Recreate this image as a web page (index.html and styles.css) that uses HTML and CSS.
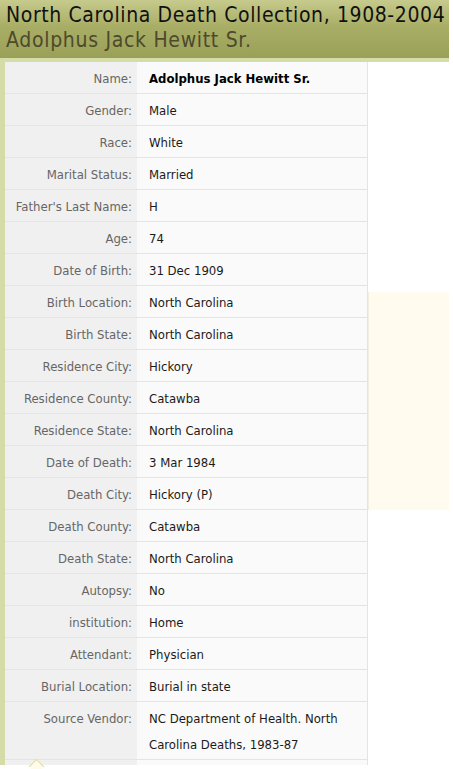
FILE: index.html
```html
<!DOCTYPE html>
<html>
<head>
<meta charset="utf-8">
<link rel="stylesheet" href="styles.css">
</head>
<body>
<div class="page">
  <div class="header">
    <h1 class="title">North Carolina Death Collection, 1908-2004</h1>
    <h2 class="subtitle">Adolphus Jack Hewitt Sr.</h2>
  </div>
  <div class="content">
    <table class="record">
      <tr><th>Name:</th><td class="name">Adolphus Jack Hewitt Sr.</td></tr>
      <tr><th>Gender:</th><td>Male</td></tr>
      <tr><th>Race:</th><td>White</td></tr>
      <tr><th>Marital Status:</th><td>Married</td></tr>
      <tr><th>Father's Last Name:</th><td>H</td></tr>
      <tr><th>Age:</th><td>74</td></tr>
      <tr><th>Date of Birth:</th><td>31 Dec 1909</td></tr>
      <tr><th>Birth Location:</th><td>North Carolina</td></tr>
      <tr><th>Birth State:</th><td>North Carolina</td></tr>
      <tr><th>Residence City:</th><td>Hickory</td></tr>
      <tr><th>Residence County:</th><td>Catawba</td></tr>
      <tr><th>Residence State:</th><td>North Carolina</td></tr>
      <tr><th>Date of Death:</th><td>3 Mar 1984</td></tr>
      <tr><th>Death City:</th><td>Hickory (P)</td></tr>
      <tr><th>Death County:</th><td>Catawba</td></tr>
      <tr><th>Death State:</th><td>North Carolina</td></tr>
      <tr><th>Autopsy:</th><td>No</td></tr>
      <tr><th>institution:</th><td>Home</td></tr>
      <tr><th>Attendant:</th><td>Physician</td></tr>
      <tr><th>Burial Location:</th><td>Burial in state</td></tr>
      <tr><th>Source Vendor:</th><td>NC Department of Health. North Carolina Deaths, 1983-87</td></tr>
      <tr class="more"><th><span class="tip"></span></th><td></td></tr>
    </table>
    <div class="side">
      <div class="ad"></div>
    </div>
  </div>
</div>
</body>
</html>
```
FILE: styles.css
```css
html, body {
  margin: 0;
  padding: 0;
  background: #ffffff;
}
body {
  font-family: "DejaVu Sans Condensed", "DejaVu Sans", sans-serif;
  width: 453px;
  height: 769px;
  overflow: hidden;
}
.page {
  width: 449px;
  background: #d6dca8;
}
.header {
  height: 58px;
  background: linear-gradient(to bottom, #c6ca8c 0%, #a9ae66 45%, #9aa057 100%);
  border-bottom: 4px solid #d6dca8;
  padding-left: 6px;
}
.title {
  margin: 0;
  padding-top: 3px;
  font-size: 21px;
  font-weight: normal;
  line-height: 24px;
  color: #111111;
  white-space: nowrap;
  letter-spacing: 0.6px;
}
.subtitle {
  margin: 0;
  font-size: 21px;
  font-weight: normal;
  line-height: 26px;
  color: #4d4a2c;
  letter-spacing: 0.7px;
  white-space: nowrap;
}
.content {
  display: flex;
  margin-left: 5px;
  background: #ffffff;
  align-items: flex-start;
}
.record {
  border-collapse: collapse;
  width: 363px;
  font-size: 13px;
}
.record th {
  width: 127px;
  background: #f0f0f0;
  color: #666666;
  font-weight: normal;
  text-align: right;
  padding: 4px 5px 1px 0;
  line-height: 26px;
  vertical-align: top;
  border-bottom: 1px solid #e4e4e4;
  white-space: nowrap;
}
.record td {
  background: #fafafa;
  color: #1a1a1a;
  padding: 4px 8px 1px 12px;
  line-height: 26px;
  vertical-align: top;
  border-bottom: 1px solid #e4e4e4;
  border-right: 1px solid #e4e4e4;
}
.record td.name {
  font-weight: bold;
  color: #000000;
}
.record tr.more th {
  position: relative;
  border-bottom: none;
}
.record tr.more td {
  border-bottom: none;
}
.tip {
  position: absolute;
  left: 26px;
  top: 1px;
  width: 10px;
  height: 10px;
  border-left: 1px solid #e8d890;
  border-top: 1px solid #e8d890;
  background: #fffbe8;
  transform: rotate(45deg);
}
.side {
  flex: 1;
  padding-top: 230px;
}
.ad {
  height: 218px;
  background: #fffbee;
  border-left: 1px solid #f3efe0;
}
```
